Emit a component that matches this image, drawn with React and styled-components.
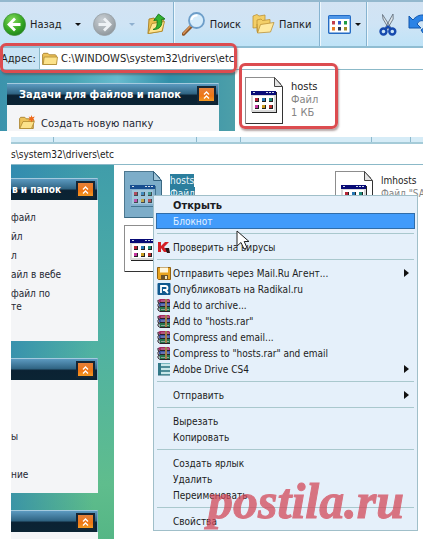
import React from "react";
import styled, { createGlobalStyle, css } from "styled-components";

const GlobalStyle = createGlobalStyle`
  * {
    box-sizing: border-box;
  }

  body {
    margin: 0;
    background: #fff;
    color: #1c1c22;
    font: 11px/13px "DejaVu Sans Condensed", "DejaVu Sans", sans-serif;
  }

  button, input {
    font: inherit;
    color: inherit;
    border: 0;
    padding: 0;
    background: none;
  }

  ul {
    list-style: none;
    margin: 0;
    padding: 0;
  }

  svg {
    display: block;
    flex: none;
  }
`;

const Page = styled.main`
  display: flex;
  flex-direction: column;
  gap: 6px;
  overflow: hidden;
`;

const Explorer = styled.section`
  position: relative;
`;

const Cropped = styled(Explorer)`
  margin-left: 11px;
  font-size: 10px;
`;

const Toolbar = styled.div`
  display: flex;
  height: 48px;
  overflow: hidden;
  border-top: 2px solid #94b8ce;
  border-bottom: 2px solid #8fbdd2;
  background: linear-gradient(#d3e3f3, #cfe4f5 50%, #bfe3f7);
`;

const ToolGroup = styled.div`
  display: flex;
  align-items: center;
  flex: none;
  gap: ${(p) => p.$gap || 8}px;
  padding: 0 ${(p) => p.$right || 8}px 0 ${(p) => p.$left || 8}px;
  border-right: 1px solid #86b3d0;
  box-shadow: 1px 0 #edf7fd;

  &:last-child {
    border: 0;
  }
`;

const ToolButton = styled.button`
  display: flex;
  align-items: center;
  gap: 4px;
`;

const Caret = styled.span`
  margin-left: ${(p) => p.$left || 0}px;
  border: 3px solid transparent;
  border-top-color: ${(p) => (p.$dim ? "#8fb0cf" : "#111")};
  border-bottom: 0;
`;

const ToolbarEdge = styled.div`
  display: grid;
  grid-template-columns: 43px 143px 44px 131px 39px;
  height: 7px;
  border-bottom: 2px solid #a5cbd8;
  background: #d6ecf7;

  span {
    border-right: 1px solid #8db9cd;
  }
`;

const AddressBar = styled.div`
  display: flex;
  align-items: center;
  height: 22px;
  border-bottom: 1px solid #8bb9c8;
  background: #fff;
`;

const AddressLabel = styled.label`
  align-self: stretch;
  width: 40px;
  padding: 4px 0 0 1px;
  border-right: 1px solid #8bb9c8;
  background: #c9e4f5;
`;

const AddressIcon = styled.span`
  padding: 0 3px 0 2px;
`;

const AddressInput = styled.input`
  flex: 1;
  min-width: 0;
  outline: 0;
`;

const AddressTail = styled(AddressBar)`
  height: 21px;
`;

const Body = styled.div`
  display: flex;
`;

const TopSidebar = styled.aside`
  width: 235px;
  padding: 13px 16px 0 7px;
  background: linear-gradient(90deg, #3c93ac, #47a4b3 30%, #67bbce 50%, #318fa9 72%, #4d9fa9);
`;

const LowSidebar = styled.aside`
  display: flex;
  flex-direction: column;
  gap: 17px;
  width: 103px;
  padding: 13px 16px 0 0;
  background:
    linear-gradient(90deg, rgba(45, 132, 178, 0.7), rgba(45, 132, 178, 0) 80%),
    linear-gradient(#409daa, #4fb1a4 45%, #5fbd8d 85%, #55b685);
`;

const PanelBox = styled.section`
  background: #f4f5f7;
`;

const PanelHead = styled.header`
  display: flex;
  align-items: center;
  justify-content: space-between;
  height: 22px;
  padding: 0 2px 0 ${(p) => p.$indent || 1}px;
  border-top: 1px solid #a4cade;
  border-right: 1px solid #77a6bf;
  background: linear-gradient(#5c9ac0, #316685 45%, #0b2233 55%, #0b2434);
`;

const PanelTitle = styled.h2`
  margin: 0;
  color: #fff;
  font-size: inherit;
  line-height: 13px;
  white-space: nowrap;
`;

const Collapse = styled.button`
  display: grid;
  place-items: center;
  flex: none;
  width: 19px;
  height: 17px;
  border: 2px solid #162634;
  background: linear-gradient(#e5803a, #ee7614 60%, #f39a22);
`;

const TaskList = styled.ul`
  display: flex;
  flex-direction: column;
  gap: 6px;
  min-height: ${(p) => p.$height || 8}px;
  padding-top: ${(p) => p.$top || 0}px;
  overflow: hidden;
`;

const TopTasks = styled(TaskList)`
  padding-left: 12px;
`;

const TaskLink = styled.a`
  display: flex;
  align-items: center;
  gap: 6px;
  color: #1e2733;
  text-decoration: none;
  white-space: pre;
`;

const Files = styled.div`
  display: grid;
  flex: 1;
  min-width: 0;
  align-content: start;
  overflow: hidden;
  background: #fff;
`;

const TopFiles = styled(Files)`
  padding: 7px 0 7px 10px;
`;

const LowFiles = styled(Files)`
  grid-template-columns: 211px 1fr;
  gap: 7px 0;
  padding: 6px 0 0 10px;
`;

const File = styled.div`
  display: flex;
  gap: 8px;
  white-space: nowrap;
`;

const FileText = styled.div`
  display: flex;
  flex-direction: column;
  align-items: flex-start;
  padding-top: 3px;

  span {
    color: #858585;
  }

  ${(p) =>
    p.$selected &&
    css`
      && > * {
        color: #e9f5fa;
        background: #2b7e9d;
      }
    `}
`;

const FileName = styled.strong`
  font-weight: 400;
`;

/* red marker drawn over the window */
const Marker = styled.div`
  position: absolute;
  border: 3px solid #dc4c50;
  border-radius: 6px;
  box-shadow: 1px 2px 2px rgba(90, 60, 60, 0.45);
  pointer-events: none;
`;

const AddressMarker = styled(Marker)`
  top: 43px;
  left: 0;
  width: 237px;
  height: 30px;
`;

const FileMarker = styled(Marker)`
  top: 63px;
  left: 239px;
  width: 99px;
  height: 66px;
`;

const Menu = styled.ul`
  && {
    position: absolute;
    top: 58px;
    left: 142px;
    right: 5px;
    padding: 1px 2px;
    border: 1px solid #a0bfc9;
    background: #e5f0fa;
  }
`;

const MenuItem = styled.button`
  display: flex;
  align-items: center;
  gap: 2px;
  width: 100%;
  height: 16px;
  padding: 0 6px 0 1px;
  text-align: left;

  ${(p) =>
    p.$bold &&
    css`
      font-size: 11px;
      font-weight: 700;
    `}

  ${(p) =>
    p.$active &&
    css`
      color: #e3f1ff;
      background: #419bfa;
      box-shadow: inset 0 0 0 1px #2f6da9;
    `}
`;

const ItemIcon = styled.span`
  flex: none;
  width: 14px;
`;

const ItemText = styled.span`
  flex: 1;
  white-space: nowrap;
`;

const Separator = styled.li`
  height: 10px;
  padding: 4px 1px 0;

  &::before {
    content: "";
    display: block;
    height: 1px;
    background: #a9c8cd;
  }
`;

const Pointer = styled.div`
  position: absolute;
  top: 93px;
  left: 225px;
`;

const Watermark = styled.div`
  position: absolute;
  right: 19px;
  bottom: 14px;
  color: #d34858;
  font: italic 700 50px/50px "Liberation Serif", serif;
  -webkit-text-stroke: 1px #d34858;
  opacity: 0.74;
  pointer-events: none;
`;

function RoundArrow({ back }) {
  const id = back ? "go" : "idle";
  return (
    <svg width="23" height="23" viewBox="0 0 23 23">
      <defs>
        <radialGradient id={id} cx=".4" cy=".3" r=".8">
          <stop offset="0" stopColor={back ? "#84d95c" : "#c9cfd4"} />
          <stop offset=".6" stopColor={back ? "#35a622" : "#a5acb1"} />
          <stop offset="1" stopColor={back ? "#167a18" : "#878f95"} />
        </radialGradient>
      </defs>
      <circle cx="11.5" cy="11.5" r="11" fill={`url(#${id})`} stroke={back ? "#3f9138" : "#979fa5"} strokeWidth=".8" />
      <path
        d={back ? "M12 5.5 6 11.5l6 6M6.5 11.5h11" : "M11 5.5l6 6-6 6M16.5 11.5h-11"}
        fill="none"
        stroke={back ? "#fff" : "#eef2f5"}
        strokeWidth="2.8"
      />
    </svg>
  );
}

function FolderIcon({ star }) {
  return (
    <svg width="16" height="16" viewBox="0 0 16 16">
      <path d="M.6 13.5v-10l1-1.2h4.2l1.4 1.5h6.3l.8 1v8.7z" fill="#edc35a" stroke="#a9812c" strokeWidth=".9" />
      <path d={star ? "M.8 13.5 4 6.5h11.4l-3 7z" : "M1.2 13.5 2.2 6h13.3l-1 7.5z"} fill="#fce28a" stroke="#b08a31" strokeWidth=".8" />
      {star && <path d="m12.5 0 .8 2.2 2.5-.6-1.5 2.2 1.5 2-2.4-.5-1 2.2-.8-2.3-2.3.3 1.5-1.9-1.2-2 2.2.6z" fill="#ee6a1c" />}
    </svg>
  );
}

function UpIcon() {
  return (
    <svg width="19" height="22" viewBox="0 0 19 22">
      <path d="M1 20.5 2 6l5-1 1.5 2 8-1.5L15.5 18z" fill="#eabf4e" stroke="#a77e23" strokeWidth=".9" />
      <path d="m1 20.5 4-10 12.5-2-2.5 9.8z" fill="#ffe58f" stroke="#b28b2d" strokeWidth=".9" />
      <path d="M6 16.5c4-1.5 4.5-4 4-9.5l-3.200.5L11.500 1l6.500 5-3.300.4c.8 6-1.500 10.200-8.700 10.100z" fill="#33b331" stroke="#14751b" strokeWidth=".9" />
    </svg>
  );
}

function SearchIcon() {
  return (
    <svg width="24" height="24" viewBox="0 0 24 24">
      <path d="m9.5 14-8 8" stroke="#8c5425" strokeWidth="3.5" strokeLinecap="round" />
      <path d="m9 13.5-7.5 8" stroke="#d99458" strokeWidth="1.5" strokeLinecap="round" />
      <circle cx="14.5" cy="8.5" r="7.5" fill="#d5ecfb" stroke="#6d9ec9" strokeWidth="1.8" />
      <path d="M9.5 8a5 5 0 0 1 6-4.500" fill="none" stroke="#fff" strokeWidth="2" />
    </svg>
  );
}

function FoldersIcon() {
  return (
    <svg width="23" height="20" viewBox="0 0 23 20">
      <path d="M1 14V2l4-1.5L7 2l6-1v12z" fill="#f3cf67" stroke="#bc9236" strokeWidth=".8" />
      <path d="M5 17.5V6l4-1 1.5 1.5L18 5.500v10z" fill="#f3cf67" stroke="#bc9236" strokeWidth=".8" />
      <path d="m5.5 19 3-8.500L22 8.500 18.500 18z" fill="#ffeaa0" stroke="#bc9236" strokeWidth=".8" />
      <path d="m5.5 19-.5-9" stroke="#bc9236" strokeWidth=".8" />
    </svg>
  );
}

const dots = ["#c33d4d", "#3559c9", "#1c9a43", "#e77c24", "#2c3550", "#a08b28"];

function ViewsIcon() {
  return (
    <svg width="23" height="19" viewBox="0 0 23 19">
      <rect x=".7" y=".7" width="21.6" height="17.6" rx="1" fill="#fff" stroke="#246bc4" strokeWidth="1.4" />
      <path d="M1 1h21v3H1z" fill="#4f97e8" />
      {dots.map((fill, i) => (
        <rect key={fill} x={4 + (i % 3) * 6} y={i < 3 ? 6 : 12} width="3" height="3.5" fill={fill} />
      ))}
    </svg>
  );
}

function CutIcon() {
  return (
    <svg width="18" height="23" viewBox="0 0 18 23">
      <path d="M3.5 1.5 4 6l6 10 1.5-2zM14 1l.2 5-6 10-1.5-2z" fill="#dce4ea" stroke="#596673" strokeWidth=".8" />
      <ellipse cx="4.5" cy="18.5" rx="3" ry="3" fill="none" stroke="#174aae" strokeWidth="2.4" />
      <ellipse cx="13.3" cy="18.5" rx="3" ry="3" fill="none" stroke="#174aae" strokeWidth="2.4" />
      <path d="m6 16 3-2.5 3 2.5" fill="none" stroke="#174aae" strokeWidth="2.2" />
    </svg>
  );
}

function UndoIcon() {
  return (
    <svg width="22" height="22" viewBox="0 0 22 22">
      <path d="M1 3v12h12l-4-4c3-5 8-4 8 0 0 3-2 5-4 6l2 3c5-2 8-5 7-11C21 0 10 0 5 7z" fill="#2b83e6" stroke="#1256ac" />
    </svg>
  );
}

const chips = ["#b52535", "#2677b5", "#208a78", "#c634a0", "#c99b1d", "#b83030"];

function FileIcon({ selected }) {
  const paper = selected ? "#7dadc9" : "#fff";
  return (
    <svg width="38" height="47" viewBox="0 0 38 47" shapeRendering="crispEdges">
      <path d="M.5.5h29l8 9v37H.5z" fill={paper} stroke={selected ? "#4e7890" : "#8d8d8d"} />
      <path d="M37.5 10v36.5H1" fill="none" stroke={selected ? "#3a6882" : "#333"} />
      <path d="m29.5.5v9h8z" fill={selected ? "#a2c6da" : "#e4e4e4"} stroke={selected ? "#32617e" : "#444"} shapeRendering="auto" />
      <path d="M7 15h25v21H7z" fill={selected ? "#44758f" : "#222"} />
      <path d="M6 14h25v21H6z" fill={selected ? "#84b0ce" : "#d8d8d8"} />
      <path d="M6 14h25v4H6z" fill={selected ? "#174e90" : "#080b76"} />
      <path d="M8 15h2v1H8zM21 15h2v1h-2zM24 15h2v1h-2zM27 15h2v1h-2z" fill="#cfdbe8" />
      <path d="M8 19h21v14H8z" fill={selected ? "#a1c7dc" : "#fff"} />
      {chips.map((fill, i) => (
        <g key={i} opacity={selected ? 0.75 : 1}>
          <rect x={10 + (i % 3) * 7} y={i < 3 ? 21 : 28} width="4" height="4" fill="#222" />
          <rect x={10 + (i % 3) * 7} y={i < 3 ? 21 : 28} width="3" height="3" fill={fill} />
        </g>
      ))}
    </svg>
  );
}

function Kaspersky() {
  return (
    <svg width="14" height="14" viewBox="0 0 14 14">
      <path d="M1 2h3v4l4-4h4L7 7l4 5H7L4 8v4H1z" fill="#d51f25" />
      <path d="M8 8h4l1 5h-3z" fill="#2b1617" />
    </svg>
  );
}

function Floppy() {
  return (
    <svg width="14" height="14" viewBox="0 0 14 14">
      <path d="M.5 1.5h13v12h-12l-1-1z" fill="#e8a421" stroke="#916112" />
      <path d="M3 1.5h8v5H3z" fill="#fff6dc" />
      <path d="M4 9h7v4.500H4z" fill="#68522b" />
      <path d="M8 10h2v3H8z" fill="#f3e4bb" />
    </svg>
  );
}

function Radikal() {
  return (
    <svg width="14" height="14" viewBox="0 0 14 14">
      <rect x=".5" y="1" width="13" height="12" rx="1" fill="#0f588e" />
      <path d="M4 11V4h4.5q2 0 2 2t-2 2H6M8 8l3 3" fill="none" stroke="#fff" strokeWidth="1.8" />
    </svg>
  );
}

function Rar() {
  return (
    <svg width="14" height="14" viewBox="0 0 14 14">
      <path d="m1 2 2-1h9l1 1v2.5H2z" fill="#a72b62" />
      <path d="M2 5h11v3.5H2z" fill="#3a53a4" />
      <path d="M2 9h11v4H3z" fill="#27754c" />
      <path d="M1 2v2.5l1.5.5L1 6v2.5l1.5.5L1 10v2l2 1.500h10M3 4.500h10M3 8.500h10" fill="none" stroke="#2c2029" />
      <path d="M4 3h8M4 7h8M4 11.5h8" stroke="#d3c4cf" strokeWidth=".6" />
      <path d="M8 1h2v12H8z" fill="#a48149" />
    </svg>
  );
}

function Drive() {
  return (
    <svg width="14" height="14" viewBox="0 0 14 14">
      <path d="M1 1h12v12H1z" fill="#76b6be" />
      <path d="M1 1h3v12H1z" fill="#327988" />
      <path d="M4 3h9M4 7h9M4 11h9" stroke="#e3f8f7" strokeWidth="1.5" />
      <path d="M4 5h9M4 9h9M1 13h12" stroke="#286775" />
    </svg>
  );
}

function SubArrow() {
  return (
    <svg width="5" height="8" viewBox="0 0 5 8">
      <path d="M0 0v8l5-4z" fill="#111" />
    </svg>
  );
}

function Panel({ title, indent, children }) {
  return (
    <PanelBox>
      <PanelHead $indent={indent}>
        <PanelTitle>{title}</PanelTitle>
        <Collapse aria-label="Свернуть">
          <svg width="9" height="10" viewBox="0 0 9 10">
            <path d="m2 4.5 2.5-2.5L7 4.5M2 8.500 4.500 6 7 8.500" fill="none" stroke="#fff" strokeWidth="1.3" />
          </svg>
        </Collapse>
      </PanelHead>
      {children}
    </PanelBox>
  );
}

function Tasks({ items, top, height }) {
  return (
    <TaskList $top={top} $height={height}>
      {items.map((text) => (
        <li key={text}>
          <TaskLink href="#">{text}</TaskLink>
        </li>
      ))}
    </TaskList>
  );
}

function FileItem({ name, details, selected }) {
  return (
    <File>
      <FileIcon selected={selected} />
      <FileText $selected={selected}>
        {name && <FileName>{name}</FileName>}
        {details.map((line) => (
          <span key={line}>{line}</span>
        ))}
      </FileText>
    </File>
  );
}

function App() {
  return (
    <>
      <GlobalStyle />
      <Page>
        <Explorer>
          <Toolbar>
            <ToolGroup $left={3} $right={7} $gap={12}>
              <ToolButton>
                <RoundArrow back />
                Назад
                <Caret $left={9} />
              </ToolButton>
              <ToolButton aria-label="Вперед">
                <RoundArrow />
                <Caret $dim $left={9} />
              </ToolButton>
              <ToolButton aria-label="Вверх">
                <UpIcon />
              </ToolButton>
            </ToolGroup>
            <ToolGroup $gap={11}>
              <ToolButton>
                <SearchIcon />
                Поиск
              </ToolButton>
              <ToolButton>
                <FoldersIcon />
                Папки
              </ToolButton>
            </ToolGroup>
            <ToolGroup $right={5}>
              <ToolButton aria-label="Вид">
                <ViewsIcon />
                <Caret />
              </ToolButton>
            </ToolGroup>
            <ToolGroup $left={12} $gap={11}>
              <ToolButton aria-label="Вырезать">
                <CutIcon />
              </ToolButton>
              <ToolButton aria-label="Отменить">
                <UndoIcon />
              </ToolButton>
            </ToolGroup>
          </Toolbar>
          <AddressBar>
            <AddressLabel htmlFor="address">Адрес:</AddressLabel>
            <AddressIcon>
              <FolderIcon />
            </AddressIcon>
            <AddressInput id="address" defaultValue="C:\WINDOWS\system32\drivers\etc" />
          </AddressBar>
          <Body>
            <TopSidebar>
              <Panel title="Задачи для файлов и папок" indent={12}>
                <TopTasks $top={10} $height={26}>
                  <li>
                    <TaskLink href="#">
                      <FolderIcon star />
                      Создать новую папку
                    </TaskLink>
                  </li>
                </TopTasks>
              </Panel>
            </TopSidebar>
            <TopFiles>
              <FileItem name="hosts" details={["Файл", "1 КБ"]} />
            </TopFiles>
          </Body>
          <AddressMarker />
          <FileMarker />
        </Explorer>

        <Cropped>
          <ToolbarEdge>
            <span />
            <span />
            <span />
            <span />
            <span />
          </ToolbarEdge>
          <AddressTail>
            <AddressInput aria-label="Адрес" defaultValue="s\system32\drivers\etc" />
          </AddressTail>
          <Body>
            <LowSidebar>
              <Panel title="в и папок">
                <Tasks top={11} height={141} items={["файл", "йл", "л", "айл в вебе", "файл по\nте"]} />
              </Panel>
              <Panel title="">
                <Tasks top={50} height={113} items={["ы", "\u00a0", "ние"]} />
              </Panel>
              <Panel title="">
                <Tasks items={[]} />
              </Panel>
            </LowSidebar>
            <LowFiles>
              <FileItem name="hosts" details={["Файл"]} selected />
              <FileItem name="lmhosts" details={['Файл "SAM"']} />
              <FileItem details={[]} />
            </LowFiles>
          </Body>
          <Menu>
            {menu.map((item, i) =>
              item === null ? (
                <Separator key={i} role="separator" />
              ) : (
                <li key={i}>
                  <MenuItem $bold={item.bold} $active={item.active}>
                    <ItemIcon>{item.icon}</ItemIcon>
                    <ItemText>{item.text}</ItemText>
                    {item.sub && <SubArrow />}
                  </MenuItem>
                </li>
              )
            )}
          </Menu>
          <Pointer>
            <svg width="14" height="21" viewBox="0 0 14 21">
              <path d="M1 1v15l4-3.5L8 19l3-1.300L8.200 11.500H13z" fill="#fff" stroke="#222" />
            </svg>
          </Pointer>
          <Watermark>postila.ru</Watermark>
        </Cropped>
      </Page>
    </>
  );
}

const menu = [
  { text: "Открыть", bold: true },
  { text: "Блокнот", active: true },
  null,
  { text: "Проверить на вирусы", icon: <Kaspersky /> },
  null,
  { text: "Отправить через Mail.Ru Агент...", icon: <Floppy />, sub: true },
  { text: "Опубликовать на Radikal.ru", icon: <Radikal /> },
  { text: "Add to archive...", icon: <Rar /> },
  { text: 'Add to "hosts.rar"', icon: <Rar /> },
  { text: "Compress and email...", icon: <Rar /> },
  { text: 'Compress to "hosts.rar" and email', icon: <Rar /> },
  { text: "Adobe Drive CS4", icon: <Drive />, sub: true },
  null,
  { text: "Отправить", sub: true },
  null,
  { text: "Вырезать" },
  { text: "Копировать" },
  null,
  { text: "Создать ярлык" },
  { text: "Удалить" },
  { text: "Переименовать" },
  null,
  { text: "Свойства" },
];

export default App;
